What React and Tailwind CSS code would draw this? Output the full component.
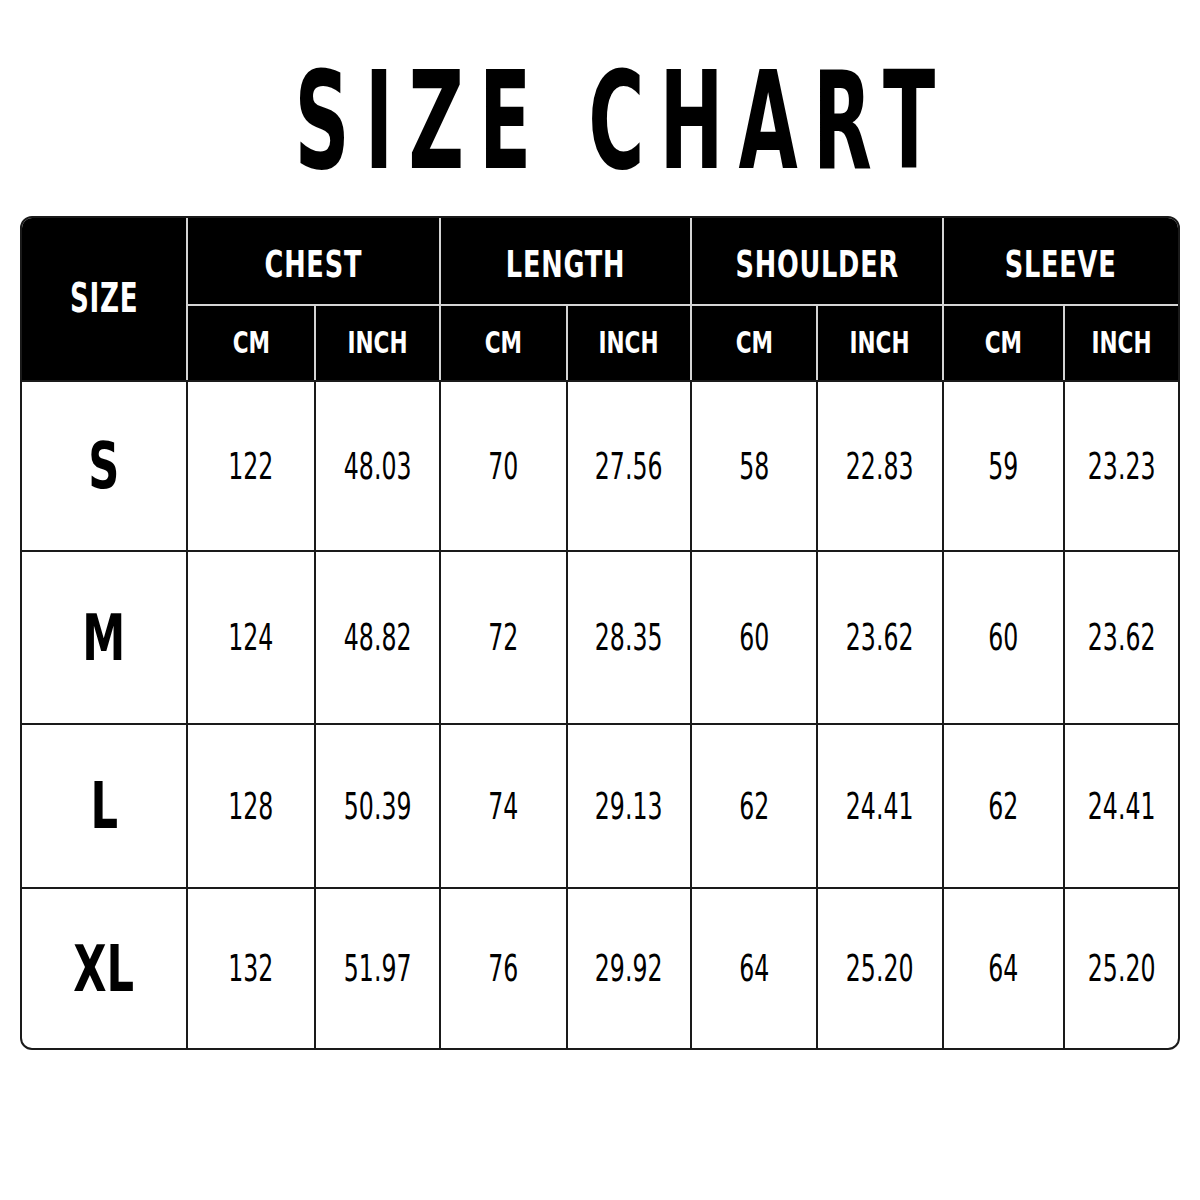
import React from "react";

const groups = ["CHEST", "LENGTH", "SHOULDER", "SLEEVE"];

const rows = [
  { size: "S", vals: ["122", "48.03", "70", "27.56", "58", "22.83", "59", "23.23"], h: "h-[170px]" },
  { size: "M", vals: ["124", "48.82", "72", "28.35", "60", "23.62", "60", "23.62"], h: "h-[173px]" },
  { size: "L", vals: ["128", "50.39", "74", "29.13", "62", "24.41", "62", "24.41"], h: "h-[164px]" },
  { size: "XL", vals: ["132", "51.97", "76", "29.92", "64", "25.20", "64", "25.20"], h: "h-[161px]" },
];

const cols = "grid-cols-[164px_128px_125px_127px_124px_126px_126px_121px_1fr]";
const cond = "font-['DejaVu_Sans_Condensed','Liberation_Sans',sans-serif]";

export default function App() {
  return (
    <div className={`w-[1200px] h-[1200px] bg-white ${cond}`}>
      {/* title */}
      <div className="h-[216px] flex items-start justify-center pl-[45px] pt-[54px]">
        <span className="inline-block scale-x-[0.63] text-[135px] leading-none font-bold tracking-[24px] text-black whitespace-nowrap">
          SIZE CHART
        </span>
      </div>

      <div className="mx-[20px] w-[1160px] rounded-[12px] overflow-hidden border-2 border-[#1a1a1a]">
        {/* header */}
        <div className={`grid ${cols} grid-rows-[88px_74px] bg-black text-white`}>
          <div className="row-span-2 flex items-center justify-center">
            <span className="inline-block scale-x-[0.71] text-[41px] font-bold tracking-[1px] leading-none pb-[2px]">
              SIZE
            </span>
          </div>
          {groups.map((g) => (
            <div
              key={g}
              className="col-span-2 flex items-center justify-center border-l-2 border-b-2 border-[#d4d4d4]"
            >
              <span className="inline-block scale-x-[0.77] text-[37px] font-bold tracking-[1px] leading-none mt-[6px]">
                {g}
              </span>
            </div>
          ))}
          {groups.map((g) =>
            ["CM", "INCH"].map((u) => (
              <div
                key={g + u}
                className="flex items-center justify-center border-l-2 border-[#d4d4d4]"
              >
                <span className="inline-block scale-x-[0.8] text-[30px] font-bold leading-none">
                  {u}
                </span>
              </div>
            ))
          )}
        </div>

        {/* body */}
        {rows.map((r) => (
          <div key={r.size} className={`grid ${cols} ${r.h} border-t-2 border-[#1a1a1a]`}>
            <div className="flex items-center justify-center">
              <span className="inline-block scale-x-[0.75] text-[64px] font-bold leading-none text-black">
                {r.size}
              </span>
            </div>
            {r.vals.map((v, j) => (
              <div
                key={j}
                className="flex items-center justify-center border-l-2 border-[#1a1a1a]"
              >
                <span className="inline-block scale-x-[0.71] text-[37px] leading-none text-black">
                  {v}
                </span>
              </div>
            ))}
          </div>
        ))}
      </div>
    </div>
  );
}
